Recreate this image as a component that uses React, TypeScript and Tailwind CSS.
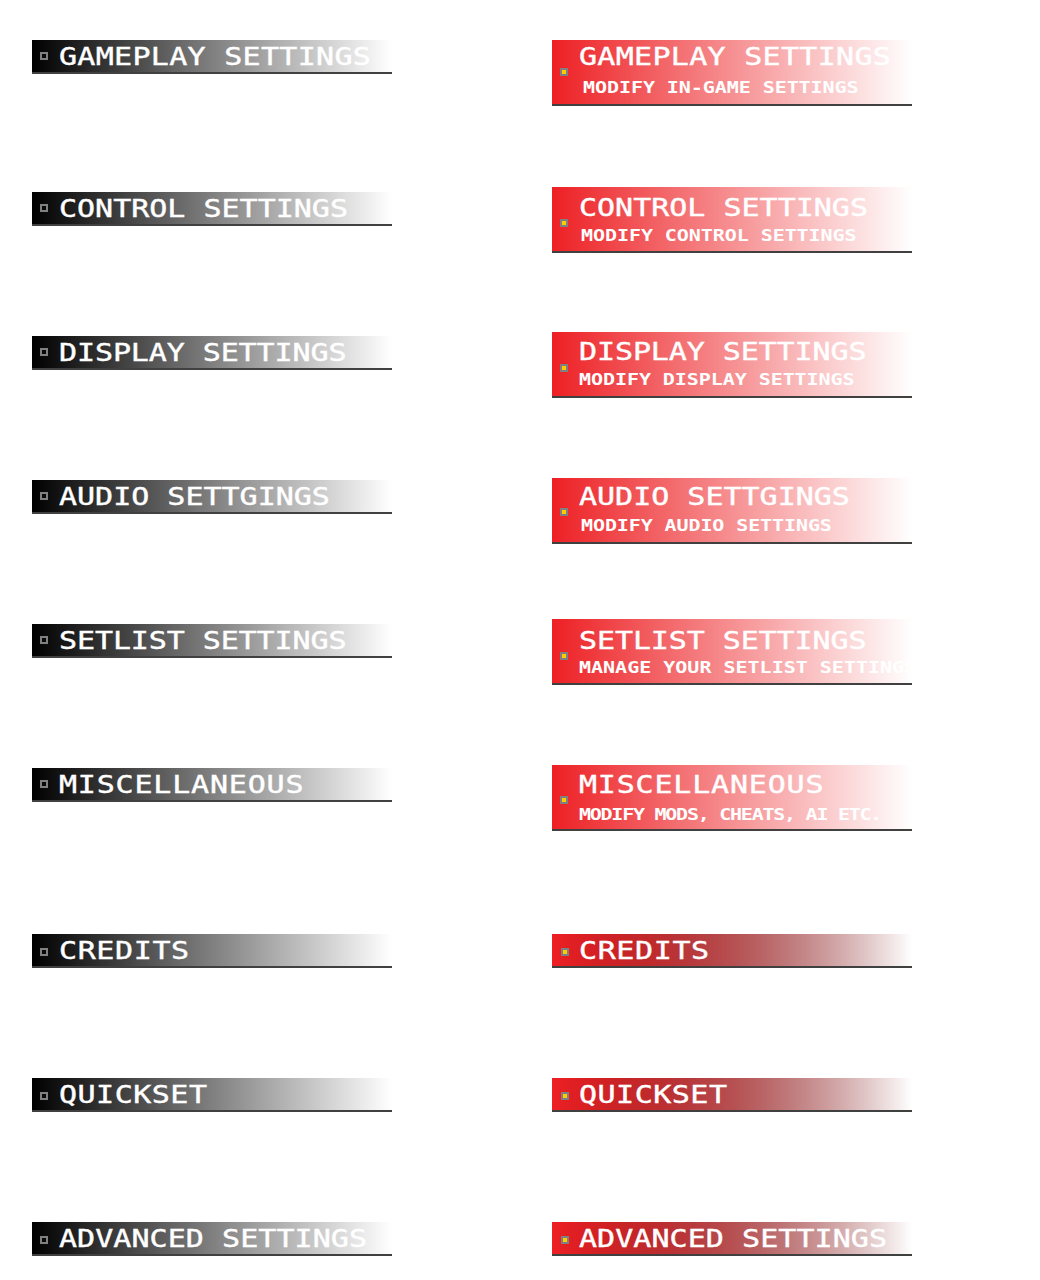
const RED_GRADIENT =
  'bg-[linear-gradient(to_right,#ed2024_0%,#ffffff_100%)]'

// per-title spacing, the original pixel font isn't really monospaced
const TITLE_TRACKING: Record<string, string> = {
  'GAMEPLAY SETTINGS': 'tracking-[0.24px]',
  'CONTROL SETTINGS': 'tracking-normal',
  'DISPLAY SETTINGS': 'tracking-[-0.08px]',
  'AUDIO SETTGINGS': 'tracking-normal',
  'SETLIST SETTINGS': 'tracking-[-0.08px]',
  MISCELLANEOUS: 'tracking-[0.65px]',
  CREDITS: 'tracking-[0.5px]',
  QUICKSET: 'tracking-[0.4px]',
  'ADVANCED SETTINGS': 'tracking-[0.05px]',
}

interface LeftRow {
  title: string
  gap: string
  markerPad: string
}

const LEFT_ROWS: LeftRow[] = [
  { title: 'GAMEPLAY SETTINGS', gap: 'mt-0', markerPad: 'mt-0' },
  { title: 'CONTROL SETTINGS', gap: 'mt-[118px]', markerPad: 'mt-0' },
  { title: 'DISPLAY SETTINGS', gap: 'mt-[110px]', markerPad: 'mt-0' },
  { title: 'AUDIO SETTGINGS', gap: 'mt-[110px]', markerPad: 'mt-0' },
  { title: 'SETLIST SETTINGS', gap: 'mt-[110px]', markerPad: 'mt-0' },
  { title: 'MISCELLANEOUS', gap: 'mt-[110px]', markerPad: 'mt-0' },
  { title: 'CREDITS', gap: 'mt-[132px]', markerPad: 'mt-1' },
  { title: 'QUICKSET', gap: 'mt-[110px]', markerPad: 'mt-1' },
  { title: 'ADVANCED SETTINGS', gap: 'mt-[110px]', markerPad: 'mt-1' },
]

interface TallRow {
  title: string
  sub: string
  gap: string
  titlePad: string
  subGap: string
  subPad: string
  subTracking: string
  markerPad: string
}

const TALL_ROWS: TallRow[] = [
  { title: 'GAMEPLAY SETTINGS', sub: 'MODIFY IN-GAME SETTINGS', gap: 'mt-0', titlePad: 'pt-[4px]', subGap: 'mt-[9px]', subPad: 'pl-[4px]', subTracking: 'tracking-[-0.05px]', markerPad: 'mt-[28px]' },
  { title: 'CONTROL SETTINGS', sub: 'MODIFY CONTROL SETTINGS', gap: 'mt-[81px]', titlePad: 'pt-[8px]', subGap: 'mt-[6px]', subPad: 'pl-[2px]', subTracking: 'tracking-[-0.05px]', markerPad: 'mt-[32px]' },
  { title: 'DISPLAY SETTINGS', sub: 'MODIFY DISPLAY SETTINGS', gap: 'mt-[79px]', titlePad: 'pt-[7px]', subGap: 'mt-[6px]', subPad: 'pl-0', subTracking: 'tracking-[-0.05px]', markerPad: 'mt-[32px]' },
  { title: 'AUDIO SETTGINGS', sub: 'MODIFY AUDIO SETTINGS', gap: 'mt-[80px]', titlePad: 'pt-[6px]', subGap: 'mt-[7px]', subPad: 'pl-[2px]', subTracking: 'tracking-[-0.08px]', markerPad: 'mt-[30px]' },
  { title: 'SETLIST SETTINGS', sub: 'MANAGE YOUR SETLIST SETTINGS', gap: 'mt-[75px]', titlePad: 'pt-[9px]', subGap: 'mt-[5px]', subPad: 'pl-0', subTracking: 'tracking-normal', markerPad: 'mt-[33px]' },
  { title: 'MISCELLANEOUS', sub: 'MODIFY MODS, CHEATS, AI ETC.', gap: 'mt-[80px]', titlePad: 'pt-[7px]', subGap: 'mt-[8px]', subPad: 'pl-0', subTracking: 'tracking-[-1px]', markerPad: 'mt-[31px]' },
]

const SHORT_ROWS = [
  { title: 'CREDITS', gap: 'mt-[103px]' },
  { title: 'QUICKSET', gap: 'mt-[110px]' },
  { title: 'ADVANCED SETTINGS', gap: 'mt-[110px]' },
]

function Marker({ active, className = '' }: { active?: boolean; className?: string }) {
  return (
    <span className={`block w-2 h-2 shrink-0 border-2 border-[#808080] ${active ? 'bg-[#ffcc00]' : 'bg-transparent'} ${className}`} />
  )
}

// stretched mono stands in for the game's square pixel font
function Title({ children }: { children: string }) {
  return (
    <span className={`block whitespace-nowrap origin-left scale-x-125 font-['DejaVu_Sans_Mono',monospace] text-[24px] leading-[26px] text-white [-webkit-text-stroke:0.4px_#ffffff] ${TITLE_TRACKING[children]}`}>
      {children}
    </span>
  )
}

function SubTitle({ children, className = '' }: { children: string; className?: string }) {
  return (
    <span className={`block whitespace-nowrap origin-left scale-x-125 font-['DejaVu_Sans_Mono',monospace] font-bold text-[16px] leading-[18px] text-white ${className}`}>
      {children}
    </span>
  )
}

export default function App() {
  return (
    <div className="flex w-[1040px] h-[1280px] gap-[160px] bg-white pt-10 pl-8 overflow-hidden">
      <div className="flex flex-col w-[360px]">
        {LEFT_ROWS.map((row) => (
          <div
            key={row.title}
            className={`${row.gap} flex items-center gap-[11px] h-[34px] pl-2 border-b-2 border-[#404040] bg-[linear-gradient(to_right,#000000_0%,#ffffff_100%)]`}
          >
            <Marker className={row.markerPad} />
            <div className="mt-[2px]">
              <Title>{row.title}</Title>
            </div>
          </div>
        ))}
      </div>

      <div className="flex flex-col w-[360px]">
        {TALL_ROWS.map((row) => (
          <div
            key={row.title}
            className={`${row.gap} flex gap-[11px] h-[66px] pl-2 border-b-2 border-[#404040] ${RED_GRADIENT}`}
          >
            <Marker active className={row.markerPad} />
            <div className={`flex flex-col min-w-0 ${row.titlePad}`}>
              <Title>{row.title}</Title>
              <div className={`${row.subGap} ${row.subPad}`}>
                <SubTitle className={row.subTracking}>{row.sub}</SubTitle>
              </div>
            </div>
          </div>
        ))}
        {SHORT_ROWS.map((row) => (
          <div
            key={row.title}
            className={`${row.gap} flex items-center gap-[10px] h-[34px] pl-[9px] border-b-2 border-[#404040] bg-[linear-gradient(to_right,#ed2024_0%,#ed202400_100%),linear-gradient(to_right,#000000_0%,#ffffff_100%)]`}
          >
            <Marker active className="mt-1" />
            <div className="mt-[2px]">
              <Title>{row.title}</Title>
            </div>
          </div>
        ))}
      </div>
    </div>
  )
}
